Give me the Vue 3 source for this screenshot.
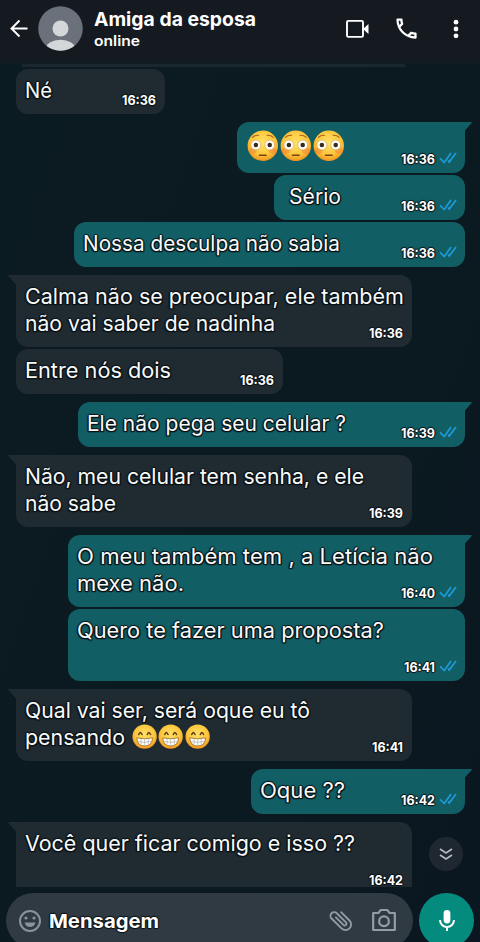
<script setup>
const messages = [
  { lines: [['Né', 27]], time: '16:36', w: 149, h: 45, gap: 2 },
  { sent: true, tail: true, emoji: 'flushed', time: '16:36', w: 228, h: 51, gap: 8 },
  { sent: true, lines: [['Sério', 52]], time: '16:36', w: 191, h: 45, gap: 2, pad: 14 },
  { sent: true, lines: [['Nossa desculpa não sabia', 257]], time: '16:36', w: 391, h: 45, gap: 2 },
  { tail: true, lines: [['Calma não se preocupar, ele também', 379], ['não vai saber de nadinha', 250]], time: '16:36', w: 396, h: 72, gap: 8 },
  { lines: [['Entre nós dois', 146]], time: '16:36', w: 267, h: 45, gap: 2 },
  { sent: true, tail: true, lines: [['Ele não pega seu celular ?', 259]], time: '16:39', w: 387, h: 45, gap: 8 },
  { tail: true, lines: [['Não, meu celular tem senha, e ele', 339], ['não sabe', 91]], time: '16:39', w: 396, h: 72, gap: 8 },
  { sent: true, tail: true, lines: [['O meu também tem , a Letícia não', 356], ['mexe não.', 107]], time: '16:40', w: 397, h: 72, gap: 8 },
  { sent: true, lines: [['Quero te fazer uma proposta?', 307]], time: '16:41', w: 397, h: 72, gap: 2 },
  { tail: true, lines: [['Qual vai ser, será oque eu tô', 285], ['pensando', 100]], emoji: 'grin', time: '16:41', w: 396, h: 72, gap: 8 },
  { sent: true, tail: true, lines: [['Oque ??', 85]], time: '16:42', w: 214, h: 45, gap: 8 },
  { tail: true, cut: true, lines: [['Você quer ficar comigo e isso ??', 330]], time: '16:42', w: 396, h: 65, gap: 8 },
]

// Widens a line of text to the given width in pixels.
const vFit = {
  mounted(el, { value }) {
    const natural = el.getBoundingClientRect().width
    el.style.transform = `scaleX(${value / natural})`
    el.style.marginRight = `${value - natural}px`
  },
}
</script>

<template>
  <div class="screen">
    <svg class="defs" width="0" height="0">
      <defs>
        <radialGradient id="face" cx=".5" cy=".4" r=".62">
          <stop offset="0" stop-color="#ffe268" />
          <stop offset=".65" stop-color="#fcc63b" />
          <stop offset="1" stop-color="#ee8f1b" />
        </radialGradient>
        <symbol id="flushed" viewBox="0 0 32 32">
          <circle cx="16" cy="16" r="15.4" fill="url(#face)" />
          <ellipse cx="5.8" cy="21" rx="4" ry="3" fill="#f4783a" opacity=".45" />
          <ellipse cx="26.2" cy="21" rx="4" ry="3" fill="#f4783a" opacity=".45" />
          <circle cx="9" cy="15.2" r="5" fill="#fffdf4" stroke="#c98a3d" stroke-width=".5" />
          <circle cx="23" cy="15.2" r="5" fill="#fffdf4" stroke="#c98a3d" stroke-width=".5" />
          <circle cx="9" cy="15.2" r="2.3" fill="#3b2820" />
          <circle cx="23" cy="15.2" r="2.3" fill="#3b2820" />
          <path d="M5.5 7.5Q8 5 11.5 5.4M26.5 7.5Q24 5 20.5 5.4" fill="none" stroke="#a9671d" stroke-width="1.2" stroke-linecap="round" />
          <path d="M12.7 25.5h6.6" stroke="#79401b" stroke-width="1.6" stroke-linecap="round" />
        </symbol>
        <symbol id="grin" viewBox="0 0 32 32">
          <circle cx="16" cy="16" r="15.4" fill="url(#face)" />
          <path d="M8.500 13.200q2-5.200 4.200 0M19.300 13.200q2-5.200 4.200 0" fill="none" stroke="#603813" stroke-width="1.900" stroke-linecap="round" />
          <path d="M6 17.500Q16 20 26 17.500Q25.500 27.800 16 27.800Q6.500 27.800 6 17.500Z" fill="#fff" stroke="#9a6324" stroke-width="1" />
          <path d="M7 22Q16 24.300 25 22M11.500 19v7M16 19.500v8M20.500 19v7" fill="none" stroke="#a9a59e" stroke-width=".8" />
        </symbol>
      </defs>
    </svg>

    <header class="top">
      <svg class="back" viewBox="0 0 20 20"><path d="M18.500 9.500H2.500M10.500 1.500L2.500 9.500l8 8" fill="none" stroke="#fff" stroke-width="1.900" /></svg>
      <svg class="avatar" viewBox="0 0 45 45">
        <clipPath id="round"><circle cx="22.500" cy="22.500" r="22.300" /></clipPath>
        <g clip-path="url(#round)">
          <rect width="45" height="45" fill="#6b717a" />
          <circle cx="22.500" cy="22.500" r="8" fill="#d3d7da" />
          <ellipse cx="22.500" cy="43" rx="15" ry="9.200" fill="#d3d7da" />
        </g>
      </svg>
      <div class="who">
        <div class="name"><span v-fit="162">Amiga da esposa</span></div>
        <div class="status"><span v-fit="46">online</span></div>
      </div>
      <svg class="video" viewBox="0 0 24 20"><rect x="2" y="1.900" width="16" height="16" rx="1.300" fill="none" stroke="#fff" stroke-width="1.900" /><path d="M18.500 9.500L23.500 5v10l-5-4.500z" fill="#fff" /></svg>
      <svg class="call" viewBox="0 0 24 24"><path fill="#fff" d="M6.540 5c.06.89.21 1.760.45 2.590l-1.200 1.200c-.41-1.200-.67-2.470-.76-3.790h1.510m9.860 12.020c.85.24 1.720.39 2.600.45v1.490c-1.320-.09-2.590-.35-3.800-.75l1.200-1.190M7.500 3H4c-.55 0-1 .45-1 1 0 9.390 7.610 17 17 17 .55 0 1-.45 1-1v-3.490c0-.55-.45-1-1-1-1.240 0-2.450-.2-3.570-.57-.1-.04-.21-.05-.31-.05-.26 0-.51.1-.71.29l-2.200 2.200c-2.830-1.450-5.150-3.760-6.590-6.590l2.200-2.200c.28-.28.36-.67.25-1.020C8.700 6.450 8.500 5.250 8.500 4c0-.55-.45-1-1-1z" /></svg>
      <svg class="dots" viewBox="0 0 6 20"><g fill="#fff"><circle cx="3" cy="3.200" r="2.400" /><circle cx="3" cy="10" r="2.400" /><circle cx="3" cy="16.800" r="2.400" /></g></svg>
    </header>

    <main class="chat">
      <div class="previous"></div>
      <div
        v-for="(m, i) in messages"
        :key="i"
        class="bubble"
        :class="{ sent: m.sent, tail: m.tail, cut: m.cut }"
        :style="{ width: m.w + 'px', height: m.h + 'px', marginTop: m.gap + 'px', paddingLeft: (m.pad || 8) + 0.5 + 'px' }"
      >
        <svg v-if="m.tail" class="corner" viewBox="0 0 9 14"><path d="M9 0H1.200Q-.4 0 .5 1.300L8 9.500V14H9Z" fill="currentColor" /></svg>
        <div class="body">
          <div v-for="(l, j) in m.lines" :key="j" class="line">
            <span v-fit="l[1]">{{ l[0] }}</span>
            <span v-if="m.emoji && j === m.lines.length - 1" class="emojis small">
              <svg v-for="n in 3" :key="n"><use :href="'#' + m.emoji" /></svg>
            </span>
          </div>
          <div v-if="!m.lines" class="emojis large">
            <svg v-for="n in 3" :key="n"><use :href="'#' + m.emoji" /></svg>
          </div>
        </div>
        <div class="meta">
          <span v-fit="m.time === '16:41' ? 31 : 34">{{ m.time }}</span>
          <svg v-if="m.sent" class="ticks" viewBox="0 0 18 13"><path d="M1 7.300L5.300 11.500L12 2M9 9.500L10.200 11L17 2" fill="none" stroke="#1d9bd8" stroke-width="1.700" /></svg>
        </div>
      </div>
    </main>

    <button class="jump" aria-label="scroll">
      <svg viewBox="0 0 14 14"><path d="M1 2l6 4 6-4M1 8l6 4 6-4" fill="none" stroke="#b3bac0" stroke-width="1.700" /></svg>
    </button>

    <footer class="bottom">
      <div class="field">
        <svg class="smile" viewBox="0 0 24 24"><circle cx="12" cy="12" r="10" fill="none" stroke="#89939a" stroke-width="2" /><circle cx="8" cy="9" r="1.600" fill="#89939a" /><circle cx="16" cy="9" r="1.600" fill="#89939a" /><path d="M6.500 13.500h11Q16 18 12 18t-5.500-4.500z" fill="#89939a" /></svg>
        <span class="hint"><span v-fit="110">Mensagem</span></span>
        <svg class="clip" viewBox="0 0 24 24"><path d="M17 6.500v10.500a5 5 0 0 1-10 0V4.500a3.300 3.300 0 0 1 6.600 0v11.500a1.600 1.600 0 0 1-3.200 0V6.500" transform="rotate(-45 12 12)" fill="none" stroke="#959da3" stroke-width="1.600" stroke-linecap="round" /></svg>
        <svg class="camera" viewBox="0 0 24 24"><path d="M2 5.500h5l1.800-2.700h6.400L17 5.500h5v15.700H2z" fill="none" stroke="#959da3" stroke-width="2" stroke-linejoin="round" /><circle cx="12" cy="13.200" r="4.500" fill="none" stroke="#959da3" stroke-width="2" /></svg>
      </div>
      <div class="mic">
        <svg viewBox="0 0 18 24"><rect x="5.600" y="1" width="6.800" height="13.500" rx="3.400" fill="#fff" /><path d="M2 11a7 7 0 0 0 14 0M9 18v4" fill="none" stroke="#fff" stroke-width="2" /></svg>
      </div>
    </footer>
  </div>
</template>

<style>
body {
  margin: 0;
  background: #0b1a21;
}
</style>

<style scoped>
.screen {
  position: relative;
  display: flex;
  flex-direction: column;
  width: 480px;
  height: 942px;
  overflow: hidden;
  background: linear-gradient(110deg, #0b1c21 0%, #0b1a21 50%, #0b1720 100%);
  color: #fff;
  font-family: Inter, "Liberation Sans", sans-serif;
}
.defs {
  position: absolute;
}
svg {
  display: block;
  flex: none;
}
.name > span,
.status > span,
.line > span:first-child,
.meta > span,
.hint > span {
  display: inline-block;
  flex: none;
  transform-origin: 0 50%;
}
.top {
  display: flex;
  flex: none;
  align-items: flex-start;
  box-sizing: border-box;
  height: 64px;
  padding-left: 9px;
  background: linear-gradient(#151920 85%, #111b21);
  white-space: nowrap;
}
.back {
  width: 20px;
  height: 20px;
  margin-top: 19px;
}
.avatar {
  width: 45px;
  height: 45px;
  margin: 6px 0 0 9px;
}
.who {
  box-sizing: border-box;
  width: 262px;
  padding: 8px 0 0 11px;
}
.name {
  height: 24px;
  font-size: 19px;
  font-weight: 700;
  line-height: 24px;
}
.status {
  font-size: 14px;
  font-weight: 600;
  line-height: 17px;
}
.video {
  width: 24px;
  height: 20px;
  margin-top: 19px;
}
.call {
  width: 27px;
  height: 27px;
  margin: 15px 0 0 24px;
}
.dots {
  width: 6px;
  height: 20px;
  margin: 18.5px 0 0 33px;
}
.chat {
  display: flex;
  flex: none;
  flex-direction: column;
  align-items: flex-start;
  padding: 0 15px 0 16px;
}
.previous {
  width: 383px;
  height: 3px;
  margin-left: 6px;
  background: #1a272e;
}
.bubble {
  position: relative;
  display: grid;
  grid-template-columns: minmax(0, 1fr);
  flex: none;
  box-sizing: border-box;
  padding: 8px 9px 5px 8px;
  border-radius: 12px;
  background: #202a31;
  color: #202a31;
}
.bubble.sent {
  align-self: flex-end;
  padding-right: 8.5px;
  background: #115f65;
  color: #115f65;
}
.bubble.tail {
  border-top-left-radius: 0;
}
.bubble.sent.tail {
  border-radius: 12px 0 12px 12px;
}
.bubble.cut {
  padding-bottom: 0;
  border-bottom-left-radius: 0;
  border-bottom-right-radius: 0;
}
.cut .meta {
  margin-bottom: -2px;
}
.corner {
  position: absolute;
  top: 0;
  left: -8px;
  width: 9px;
  height: 14px;
}
.sent .corner {
  right: -7px;
  left: auto;
  transform: scaleX(-1);
}
.body,
.meta {
  grid-area: 1 / 1;
}
.body {
  height: 27px;
  color: #f8fafa;
  font-size: 21.5px;
  line-height: 27px;
  white-space: nowrap;
  text-shadow: 1px 0 1px #0a1215, -1px 0 1px #0a1215, 0 1px 1px #0a1215, 0 -1px 1px #0a1215, 1px 1px 1px #0a1215, -1px 1px 1px #0a1215;
}
.line {
  display: flex;
}
.emojis {
  display: flex;
}
.small {
  margin: 0 0 0 7px;
  gap: 1.5px;
}
.small svg {
  width: 25.3px;
  height: 25.3px;
}
.large {
  padding: 0 0 0 1.5px;
  gap: 1.6px;
}
.large svg {
  width: 31.6px;
  height: 31.6px;
}
.meta {
  display: flex;
  place-self: end;
  color: #fff;
  font-size: 13px;
  font-weight: 700;
  line-height: 18px;
  text-shadow: 1px 0 1px #0a1215, -1px 0 1px #0a1215, 0 1px 1px #0a1215, 0 -1px 1px #0a1215;
}
.ticks {
  width: 18px;
  height: 13px;
  margin: 1px 0 0 4px;
}
.jump {
  position: absolute;
  top: 837px;
  left: 429px;
  display: grid;
  place-items: center;
  width: 34px;
  height: 34px;
  padding: 0;
  border: 0;
  border-radius: 50%;
  background: #1f2830;
}
.jump svg {
  width: 14px;
  height: 14px;
}
.bottom {
  display: flex;
  flex: none;
  gap: 6px;
  margin-top: 6px;
  padding-left: 6px;
}
.field {
  display: flex;
  flex: none;
  align-items: center;
  box-sizing: border-box;
  width: 407px;
  height: 55px;
  padding-left: 12px;
  border-radius: 28px;
  background: #303a42;
}
.smile {
  width: 24px;
  height: 24px;
}
.hint {
  width: 279px;
  margin: 2px 0 0 7px;
  font-size: 19px;
  font-weight: 700;
  line-height: 24px;
  white-space: nowrap;
  text-shadow: 1px 0 1px #0a1215, -1px 0 1px #0a1215, 0 1px 1px #0a1215, 0 -1px 1px #0a1215;
}
.clip {
  width: 27px;
  height: 27px;
}
.camera {
  width: 26px;
  height: 26px;
  margin: 0 0 2px 16px;
}
.mic {
  display: grid;
  flex: none;
  place-items: center;
  width: 55px;
  height: 55px;
  border-radius: 50%;
  background: #058a7e;
}
.mic svg {
  width: 18px;
  height: 24px;
}
</style>
